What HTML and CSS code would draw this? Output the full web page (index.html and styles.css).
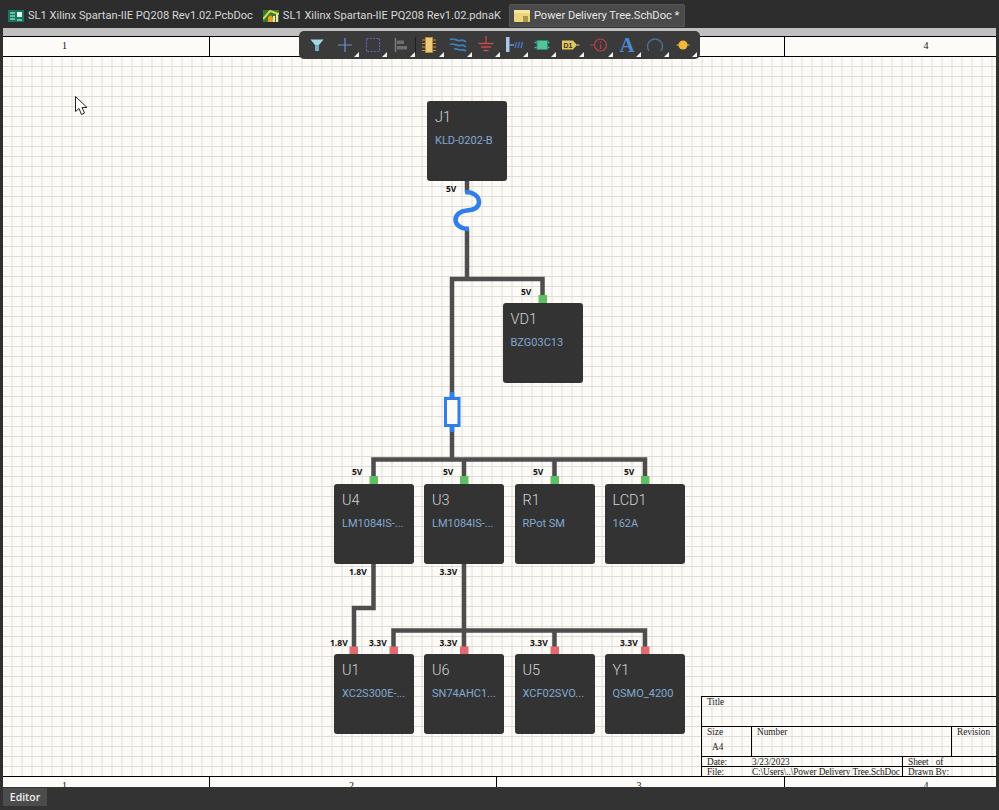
FILE: index.html
```html
<!DOCTYPE html>
<html lang="en">
<head>
<meta charset="utf-8">
<title>Power Delivery Tree.SchDoc</title>
<link rel="stylesheet" href="styles.css">
</head>
<body>
<div class="tabbar">
  <div class="tab">
    <svg class="tab-icon" viewBox="0 0 16 12"><rect width="16" height="12" fill="#0f7a5c"/><path d="M2 3h5M2 6h5M2 9h5M9 10h5" stroke="#e8f4f0" fill="none"/><rect x="9" y="2" width="5" height="5" fill="#e8f4f0"/></svg>
    <span>SL1 Xilinx Spartan-IIE PQ208 Rev1.02.PcbDoc</span>
  </div>
  <div class="tab">
    <svg class="tab-icon" viewBox="0 0 16 12"><rect width="16" height="12" fill="#2c7a3c"/><path d="M0 9L7 1l9 3" stroke="#e8d040" stroke-width="2" fill="none"/><path d="M5 12V7l3-2 2 3v4z" fill="#e8a020"/><path d="M10 12V6h2v6zM13 12V4h2v8z" fill="#f0e8a0"/></svg>
    <span>SL1 Xilinx Spartan-IIE PQ208 Rev1.02.pdnaK</span>
  </div>
  <div class="tab tab-active">
    <svg class="tab-icon" viewBox="0 0 16 12"><rect width="16" height="12" rx="1" fill="#ecd57c"/><rect x="0" y="0" width="16" height="3" fill="#f6e6a4"/><path d="M9 7h5M9 9h5M9 11h5" stroke="#6b5a20" fill="none"/></svg>
    <span>Power Delivery Tree.SchDoc *</span>
  </div>
</div>

<main class="workspace">
  <div class="sheet">
    <div class="strip"></div>
    <div class="ruler ruler-top">
      <div class="cell cell-first">1</div>
      <div class="cell">2</div>
      <div class="cell">3</div>
      <div class="cell cell-last">4</div>
    </div>
    <div class="canvas">
      <svg class="wires" viewBox="3 57 993 719" width="993" height="719">
        <g class="wire">
          <path d="M467 180V192M467 229V279M452 459V279H542.500V296"/>
          <path d="M373.500 478V459.500H645V478M464 459.500V478M554.500 459.500V478"/>
          <path d="M373.500 563V608H354V648"/>
          <path d="M464 563V648M393.500 648V630.500H645V648M554.500 630.500V648"/>
        </g>
        <g class="passive">
          <path class="fuse" d="M465 192C473 192 479 196 479 202C479 208 473 210 467 210.500C460 211 455.500 215 455.500 220C455.500 225 461 229 469 229"/>
          <rect class="res-body" x="445.500" y="398.500" width="13.500" height="27"/>
          <path class="fuse" d="M452 392V398M452 426V432"/>
        </g>
        <g class="pin-in">
          <rect x="538.500" y="295" width="8.500" height="8"/>
          <rect x="369.500" y="476" width="8.500" height="8"/>
          <rect x="460" y="476" width="8.500" height="8"/>
          <rect x="550.500" y="476" width="8.500" height="8"/>
          <rect x="641" y="476" width="8.500" height="8"/>
        </g>
        <g class="pin-out">
          <rect x="349.500" y="646.500" width="8.500" height="8"/>
          <rect x="389.500" y="646.500" width="8.500" height="8"/>
          <rect x="460" y="646.500" width="8.500" height="8"/>
          <rect x="550.500" y="646.500" width="8.500" height="8"/>
          <rect x="641" y="646.500" width="8.500" height="8"/>
        </g>
        <g class="net">
          <text x="446" y="192">5V</text>
          <text x="521" y="295">5V</text>
          <text x="352" y="475">5V</text>
          <text x="443" y="475">5V</text>
          <text x="533" y="475">5V</text>
          <text x="624" y="475">5V</text>
          <text x="349" y="575">1.8V</text>
          <text x="439.500" y="575">3.3V</text>
          <text x="330" y="646">1.8V</text>
          <text x="369" y="646">3.3V</text>
          <text x="439.500" y="646">3.3V</text>
          <text x="530" y="646">3.3V</text>
          <text x="620" y="646">3.3V</text>
        </g>
      </svg>

      <div class="node n-j1"><div class="ref">J1</div><div class="part">KLD-0202-B</div></div>
      <div class="node n-vd1"><div class="ref">VD1</div><div class="part">BZG03C13</div></div>
      <div class="node n-u4"><div class="ref">U4</div><div class="part">LM1084IS-...</div></div>
      <div class="node n-u3"><div class="ref">U3</div><div class="part">LM1084IS-...</div></div>
      <div class="node n-r1"><div class="ref">R1</div><div class="part">RPot SM</div></div>
      <div class="node n-lcd1"><div class="ref">LCD1</div><div class="part">162A</div></div>
      <div class="node n-u1"><div class="ref">U1</div><div class="part">XC2S300E-...</div></div>
      <div class="node n-u6"><div class="ref">U6</div><div class="part">SN74AHC1...</div></div>
      <div class="node n-u5"><div class="ref">U5</div><div class="part">XCF02SVO...</div></div>
      <div class="node n-y1"><div class="ref">Y1</div><div class="part">QSMO_4200</div></div>

      <svg class="cursor" viewBox="0 0 13 20" width="13" height="20"><path d="M.5.500V15.500L4 12.500L6.500 18.500L9.500 17L7 11.500H12z" fill="#fff" stroke="#222"/></svg>

      <div class="titleblock">
        <div class="tb-title">Title</div>
        <div class="tb-size"><div>Size</div><div class="tb-a4">A4</div></div>
        <div class="tb-number">Number</div>
        <div class="tb-rev">Revision</div>
        <div class="tb-date"><span class="tb-key">Date:</span><span>3/23/2023</span></div>
        <div class="tb-sheet">Sheet &nbsp; of</div>
        <div class="tb-file"><span class="tb-key">File:</span><span class="tb-path">C:\Users\..\Power Delivery Tree.SchDoc</span></div>
        <div class="tb-drawn">Drawn By:</div>
      </div>
    </div>
    <div class="ruler ruler-bottom">
      <div class="cell cell-first">1</div>
      <div class="cell">2</div>
      <div class="cell">3</div>
      <div class="cell cell-last">4</div>
    </div>
  </div>

  <div class="toolbar">
    <div class="tool tool-plain"><svg viewBox="0 0 28 28"><path d="M7.500 8.500H20.500L16 14V20H12V14z" fill="#a5d6e4"/><path d="M12 14H16V20H12z" fill="#6fb0c4"/></svg></div>
    <div class="tool"><svg viewBox="0 0 28 28"><path d="M7 14H21M14 7V21" stroke="#6f8fd0" stroke-width="1.200" fill="none"/></svg></div>
    <div class="tool"><svg viewBox="0 0 28 28"><rect x="7.500" y="7.500" width="13" height="13" fill="none" stroke="#6464c0" stroke-width="1.200" stroke-dasharray="2 1.300"/></svg></div>
    <div class="tool tool-sep"><svg viewBox="0 0 28 28"><path d="M8.500 7V21" stroke="#7c7c7c" stroke-width="1.500"/><path d="M10 9.500H17V13H10zM10 15H20V18.500H10z" fill="#6e6e6e"/></svg></div>
    <div class="tool"><svg viewBox="0 0 28 28"><path d="M7 9H21M7 12.500H21M7 16H21M7 19.500H21" stroke="#d08a38"/><rect x="10.500" y="6.500" width="7" height="15" fill="#eccb78" stroke="#b88a38"/></svg></div>
    <div class="tool"><svg viewBox="0 0 28 28"><path d="M6 8.500C10 6.500 13 10.500 16 9.500S20 9 22 11M6 13.500C10 11.500 13 15.500 16 14.500S20 14 22 16M10 18C13 17 15 19.500 17 19S20 18.500 22 20" fill="none" stroke="#3f82bc" stroke-width="1.700"/></svg></div>
    <div class="tool"><svg viewBox="0 0 28 28"><path d="M14 5V12.500M6.500 12.500H21.500M9 16H19M11.500 19.500H16.500" stroke="#c8484c" stroke-width="1.300" fill="none"/></svg></div>
    <div class="tool"><svg viewBox="0 0 28 28"><rect x="6" y="6" width="3.500" height="15" fill="#a8c8f0"/><path d="M9.500 14H14" stroke="#88a8d8" stroke-width="1.300"/><path d="M15 17L16.500 11M18 17L19.500 11M21 17L22.500 11" stroke="#4f78d0" stroke-width="1.300"/></svg></div>
    <div class="tool"><svg viewBox="0 0 28 28"><path d="M6.500 11.500H21.500M6.500 16.500H21.500" stroke="#5aa0d0" stroke-width="1.500"/><rect x="9" y="9.500" width="10.500" height="9" fill="#54c49a" stroke="#2f8a68"/></svg></div>
    <div class="tool"><svg viewBox="0 0 28 28"><path d="M6 9.500H17L21 14L17 18.500H6z" fill="#e2c860"/><path d="M21 14H23.500" stroke="#e2c860"/><text class="port-text" x="7.500" y="16.700">D1</text></svg></div>
    <div class="tool"><svg viewBox="0 0 28 28"><circle cx="16.500" cy="14" r="6" fill="none" stroke="#b84050" stroke-width="1.200"/><path d="M6 14H10.500M16.500 10.500V12M16.500 13V18" stroke="#b84050" stroke-width="1.200"/></svg></div>
    <div class="tool"><svg viewBox="0 0 28 28"><text class="a-text" x="14" y="21">A</text></svg></div>
    <div class="tool"><svg viewBox="0 0 28 28"><path d="M8 20A7.500 7.500 0 1 1 20 20" fill="none" stroke="#4f6f94" stroke-width="1.400"/></svg></div>
    <div class="tool"><svg viewBox="0 0 28 28"><path d="M7.500 14H20.500" stroke="#d8a040" stroke-width="1.200"/><circle cx="14" cy="14" r="4.500" fill="#f4b838"/></svg></div>
  </div>
</main>

<footer class="statusbar"><div class="editor-tab">Editor</div></footer>
</body>
</html>
```

FILE: styles.css
```css
* { box-sizing: border-box; }

html, body {
  margin: 0;
  height: 100%;
}

body {
  display: flex;
  flex-direction: column;
  height: 810px;
  overflow: hidden;
  background: #2f2f2f;
  font-family: Roboto, "Open Sans", sans-serif;
}

.tabbar {
  flex: 0 0 28px;
  display: flex;
  align-items: flex-start;
  gap: 10px;
  padding: 4px 0 0 8px;
  background: #2d2d2d;
  color: #d8d8d8;
  font-size: 11.100px;
}

.tab {
  display: flex;
  align-items: center;
  gap: 4px;
  height: 23px;
  white-space: nowrap;
}

.tab-icon {
  width: 16px;
  height: 12px;
  flex: none;
}

.tab-active {
  margin-left: -2px;
  min-width: 176px;
  padding: 0 4px;
  background: #4a4a4a;
  border: 1px solid #555;
  border-radius: 2px 2px 0 0;
  color: #e8e8e8;
}

.workspace {
  flex: 0 0 759px;
  position: relative;
  padding: 0 3px;
  overflow: hidden;
}

.sheet {
  display: flex;
  flex-direction: column;
  height: 100%;
  background: #fdfbf8;
}

.strip {
  flex: 0 0 8px;
  background: #c0c0c0;
}

.ruler {
  display: grid;
  grid-template-columns: 207px 287px 288px 1fr;
  flex: none;
  font-family: "Liberation Serif", serif;
  font-size: 10px;
  color: #111;
  background: #fdfbf8;
}

.ruler-top {
  height: 21px;
  border-top: 1.500px solid #000;
  border-bottom: 1.500px solid #000;
}

.ruler-bottom {
  height: 30px;
  border-top: 1.500px solid #000;
}

.cell {
  padding-top: 3px;
  padding-right: 3px;
  text-align: center;
  border-right: 1.500px solid #000;
}

.cell-first { padding-right: 83px; }

.cell-last {
  padding-right: 0;
  padding-left: 71px;
  border-right: 0;
}

.canvas {
  position: relative;
  flex: 0 0 719px;
  background-color: #fdfbf8;
  background-image:
    linear-gradient(to right, #e2dcd8 1.500px, transparent 1.500px),
    linear-gradient(to bottom, #e2dcd8 1.500px, transparent 1.500px);
  background-size: 10px 10px;
  background-position: 8.500px 9px;
}

.wires {
  position: absolute;
  left: 0;
  top: 0;
}

.wire path {
  fill: none;
  stroke: #4e4e4e;
  stroke-width: 4.500px;
}

.fuse {
  fill: none;
  stroke: #2f7fe6;
  stroke-width: 4.500px;
}

.res-body {
  fill: #fdfbf8;
  stroke: #2f7fe6;
  stroke-width: 3px;
}

.pin-in rect { fill: #5fbf63; }
.pin-out rect { fill: #e46a70; }

.net text {
  font-family: "Open Sans", sans-serif;
  font-size: 8.500px;
  font-weight: 700;
  fill: #111;
}

.node {
  position: absolute;
  width: 80px;
  height: 80px;
  padding: 6px 8px;
  background: #333333;
  border-radius: 3px;
  white-space: nowrap;
}

.ref {
  font-size: 14.500px;
  font-weight: 300;
  line-height: 21px;
  color: #d4d4d4;
}

.part {
  margin-top: 5px;
  font-size: 11px;
  line-height: 15px;
  color: #82a9d2;
}

.n-j1 { left: 424px; top: 43.500px; }
.n-vd1 { left: 499.500px; top: 246px; }
.n-u4 { left: 331px; top: 426.500px; }
.n-u3 { left: 421px; top: 426.500px; }
.n-r1 { left: 511.500px; top: 426.500px; }
.n-lcd1 { left: 601.500px; top: 426.500px; }
.n-u1 { left: 331px; top: 597px; }
.n-u6 { left: 421px; top: 597px; }
.n-u5 { left: 511.500px; top: 597px; }
.n-y1 { left: 601.500px; top: 597px; }

.cursor {
  position: absolute;
  left: 72px;
  top: 39px;
}

.titleblock {
  position: absolute;
  right: 0;
  bottom: 0;
  display: grid;
  width: 295px;
  height: 80px;
  grid-template-columns: 50px 151px 49px 45px;
  grid-template-rows: 30px 30px 10px 9px;
  border-top: 1px solid #000;
  border-left: 1px solid #000;
  font-family: "Liberation Serif", serif;
  font-size: 9.300px;
  line-height: 10px;
  color: #222;
}

.titleblock > div {
  white-space: nowrap;
}

.tb-title {
  grid-column: 1 / 5;
  padding: 0 0 0 5px;
  border-bottom: 1px solid #000;
}

.tb-size {
  padding-left: 5px;
  border-right: 1px solid #000;
  border-bottom: 1px solid #000;
}

.tb-a4 {
  margin-top: 5px;
  padding-left: 5px;
}

.tb-number {
  grid-column: 2 / 4;
  padding-left: 5px;
  border-right: 1px solid #000;
  border-bottom: 1px solid #000;
}

.tb-rev {
  padding-left: 5px;
  border-bottom: 1px solid #000;
}

.tb-date, .tb-file {
  grid-column: 1 / 3;
  display: flex;
  border-right: 1px solid #000;
  padding-left: 5px;
}

.tb-date { border-bottom: 1px solid #000; }

.tb-key { flex: 0 0 45px; }

.tb-path { letter-spacing: -0.100px; }

.tb-sheet, .tb-drawn {
  grid-column: 3 / 5;
  padding-left: 5px;
}

.tb-sheet { border-bottom: 1px solid #000; }

.toolbar {
  position: absolute;
  left: 299px;
  top: 3px;
  display: flex;
  width: 401px;
  height: 28px;
  padding-left: 3.600px;
  background: #3a3a3a;
  border-radius: 5px;
}

.tool {
  position: relative;
  flex: 0 0 28.200px;
  height: 28px;
}

.tool svg {
  display: block;
  width: 28px;
  height: 28px;
}

.tool::after {
  content: "";
  position: absolute;
  right: 0;
  bottom: 2px;
  border-style: solid;
  border-width: 0 0 5px 5px;
  border-color: transparent transparent #f0f0f0 transparent;
}

.tool-plain::after { display: none; }

.tool-sep::before {
  content: "";
  position: absolute;
  right: -1px;
  top: 6px;
  width: 1px;
  height: 17px;
  background: #1f1f1f;
}

.port-text {
  font-family: "Liberation Sans", sans-serif;
  font-size: 7px;
  font-weight: 700;
  fill: #3a3010;
}

.a-text {
  font-family: "Liberation Serif", serif;
  font-size: 21px;
  font-weight: 700;
  text-anchor: middle;
  fill: #4a8ad4;
}

.statusbar {
  flex: 0 0 23px;
  padding: 1px 0 0 3px;
  background: #333333;
}

.editor-tab {
  width: 44px;
  height: 18px;
  background: #4c4c4c;
  color: #f0f0f0;
  font-family: "Open Sans", sans-serif;
  font-size: 10.500px;
  font-weight: 600;
  line-height: 18px;
  text-align: center;
}
```
